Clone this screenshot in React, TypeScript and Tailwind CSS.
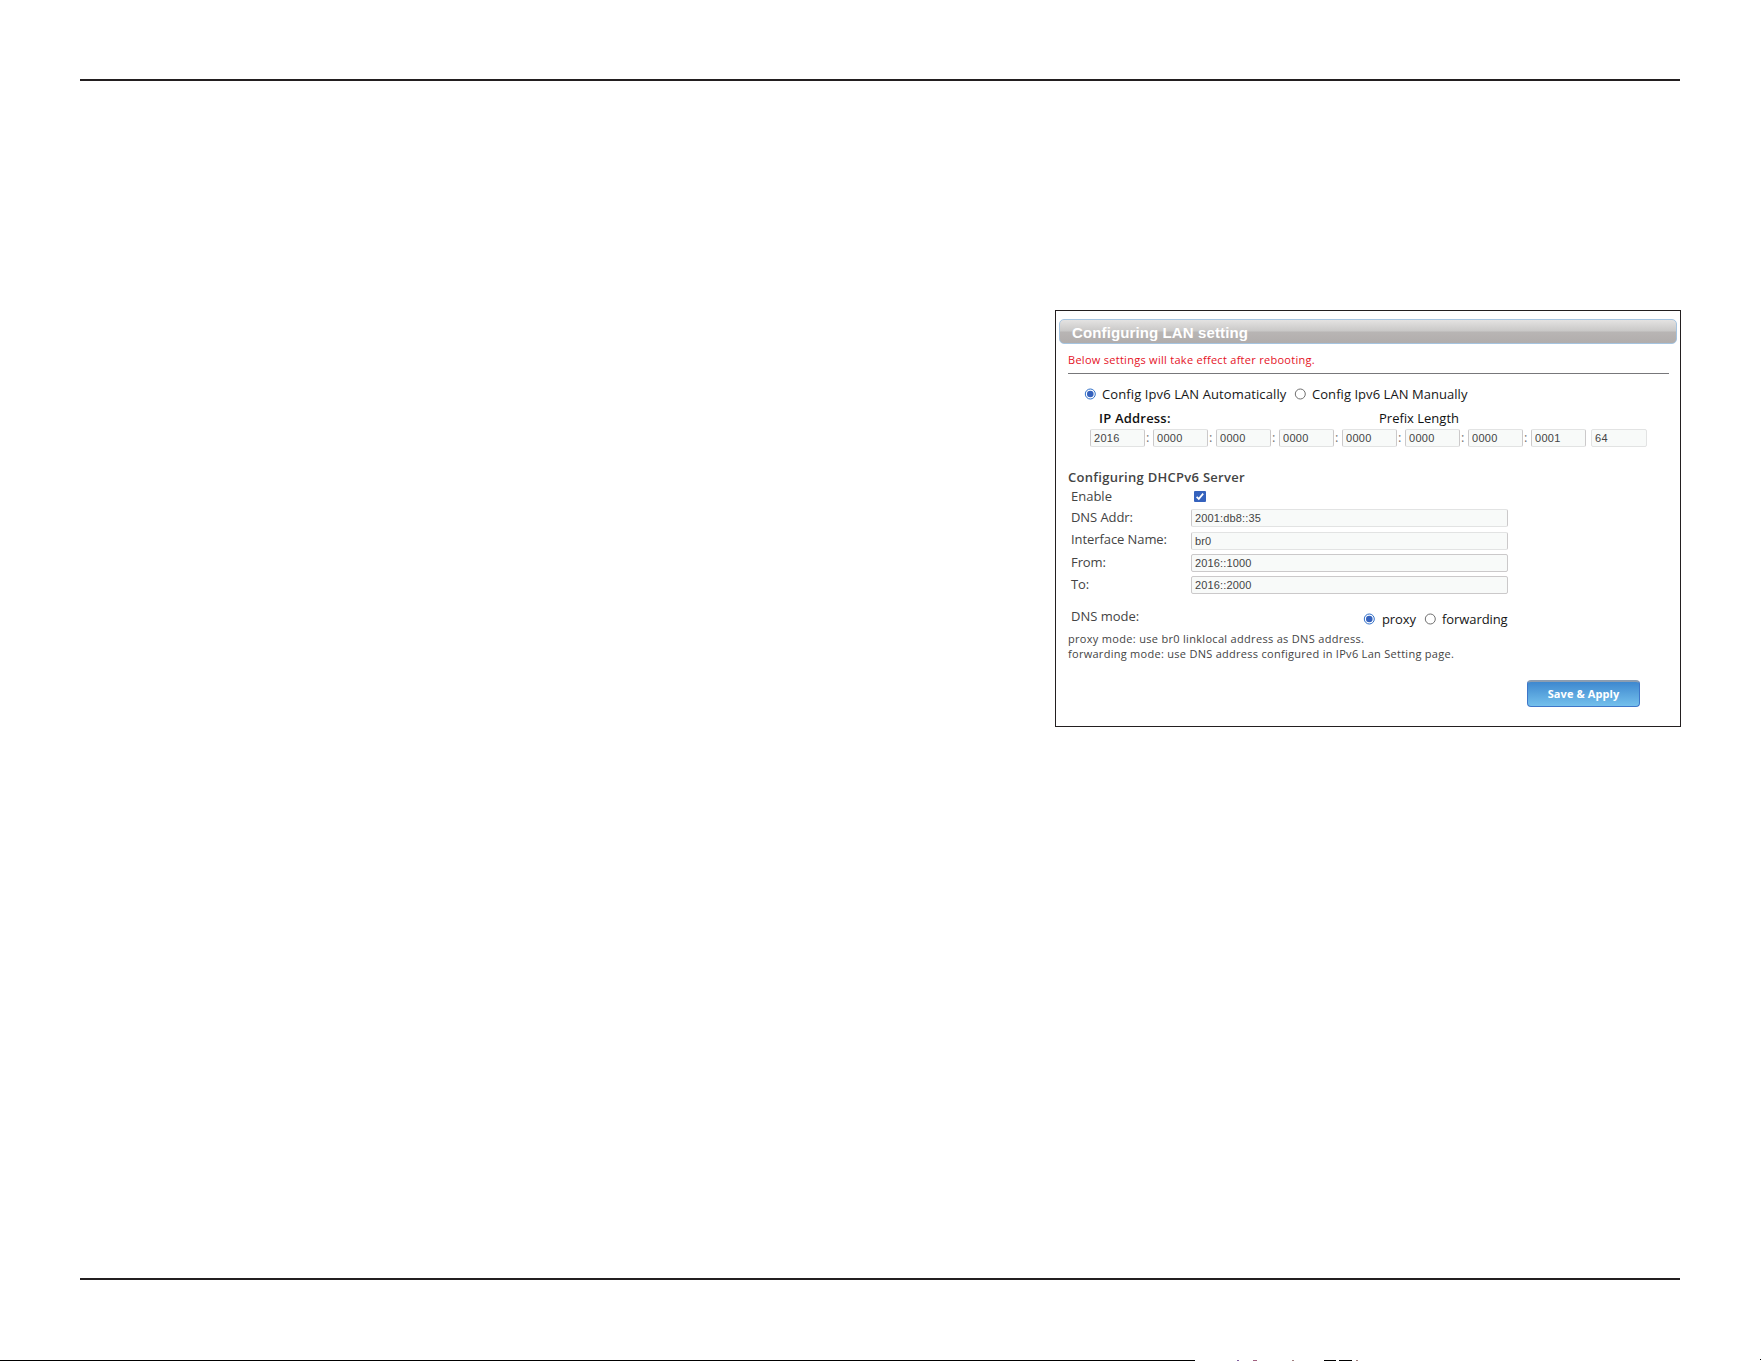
import React from 'react'

const addressParts: string[] = ['2016', '0000', '0000', '0000', '0000', '0000', '0000', '0001']

interface RadioProps {
  checked?: boolean
}

const Radio: React.FC<RadioProps> = ({ checked }) => {
  return (
    <svg className="-mt-px size-3 shrink-0" viewBox="0 0 12 12">
      <circle cx="6.3" cy="6" r="5" fill="#fff" stroke={checked ? '#2f6fc8' : '#6f6f6f'} strokeWidth="1" />
      {checked && <circle cx="6.3" cy="6" r="3.3" fill="#3562bd" />}
    </svg>
  )
}

interface FieldProps {
  label: string
  value: string
  labelClass: string
  fieldClass: string
}

const Field: React.FC<FieldProps> = ({ label, value, labelClass, fieldClass }) => {
  return (
    <div className="flex h-[18px]">
      <div className={`w-[120px] shrink-0 text-[13px] leading-[18px] tracking-[-0.08px] whitespace-nowrap ${labelClass}`}>
        {label}
      </div>
      <input
        readOnly
        value={value}
        className={`h-[18px] w-[317px] rounded-[2px] border border-x-[#cbc9ca] bg-[#f8faf9] pl-[3px] font-['Liberation_Sans'] text-[11px] tracking-[0.15px] text-[#444] ${fieldClass}`}
      />
    </div>
  )
}

const LanSettings: React.FC = () => {
  return (
    <div className="h-[417px] w-[626px] shrink-0 border border-[#231f20] bg-white pt-2 pl-[3px] text-[#444]">
      <div className="h-[25px] w-[618px] rounded-[5px] border border-[#a5c4e0] bg-[linear-gradient(#e4e3e2,#c9c8c7_48%,#b8b5b4_52%,#b1adac)] pl-3 font-['Liberation_Sans'] text-[15px] leading-[25px] font-bold tracking-[0.12px] text-white">
        Configuring LAN setting
      </div>

      <div className="ml-[9px]">
        <div className="mt-2 text-[11px] leading-4 text-[#e5121f]">
          <span className="tracking-[0.28px]">Below settings will take effect after rebooting.</span>
        </div>
        <div className="mt-[5px] h-px w-[601px] bg-[#77777a]" />

        <div className="mt-[11px] ml-4 flex h-[18px] items-center text-[13px] leading-[18px] whitespace-nowrap text-[#161616]">
          <Radio checked />
          <span className="ml-[6px] w-[192px] tracking-[0.1px]">Config Ipv6 LAN Automatically</span>
          <Radio />
          <span className="ml-[6px] tracking-[0.05px]">Config Ipv6 LAN Manually</span>
        </div>

        <div className="mt-[6px] ml-[31px] flex h-[18px] text-[13px] leading-[18px] whitespace-nowrap text-[#111]">
          <span className="w-[280px] font-semibold tracking-[0.2px]">IP Address:</span>
          <span>Prefix Length</span>
        </div>

        <div className="mt-[2px] ml-[22px] flex h-[18px]">
          {addressParts.map((part, index) => {
            return (
              <div key={index} className="flex w-[63px]">
                <input
                  readOnly
                  value={part}
                  className="h-[18px] w-[55px] rounded-[2px] border border-x-[#cbc9ca] border-y-[#e2e3e3] bg-[#f8faf9] pl-[3px] font-['Liberation_Sans'] text-[11px] tracking-[0.3px] text-[#444]"
                />
                {index < addressParts.length - 1 && (
                  <span className="ml-[1px] text-[13px] leading-[17px] text-[#777]">:</span>
                )}
              </div>
            )
          })}
          <input
            readOnly
            value="64"
            className="-ml-[3px] h-[18px] w-14 rounded-[2px] border border-[#e2e3e3] bg-[#f8faf9] pl-[3px] font-['Liberation_Sans'] text-[11px] tracking-[0.3px] text-[#444]"
          />
        </div>

        <div className="mt-[21px] h-[18px] text-[13px] leading-[18px] font-semibold tracking-[0.28px]">
          Configuring DHCPv6 Server
        </div>
        <div className="mt-px ml-[3px]">
          <div className="flex h-[18px] text-[13px] leading-[18px]">
            <div className="w-[123px]">Enable</div>
            <svg className="mt-[4px] h-[11px] w-[12px]" viewBox="0 0 12 11">
              <rect width="12" height="11" rx="1" fill="#3562bd" />
              <path d="M2.6 5.8 4.8 7.9 9.2 2.6" fill="none" stroke="#fff" strokeWidth="1.7" />
            </svg>
          </div>
          <div className="mt-1">
            <Field label="DNS Addr:" value="2001:db8::35" labelClass="-mt-px" fieldClass="border-y-[#e2e3e3]" />
          </div>
          <div className="mt-[5px]">
            <Field label="Interface Name:" value="br0" labelClass="-mt-[2px]" fieldClass="border-y-[#e2e3e3]" />
          </div>
          <div className="mt-1 flex flex-col gap-1">
            <Field label="From:" value="2016::1000" labelClass="-mt-px" fieldClass="border-y-[#cbc9ca]" />
            <Field label="To:" value="2016::2000" labelClass="-mt-px" fieldClass="border-y-[#cbc9ca]" />
          </div>
          <div className="mt-[14px] flex h-[18px] text-[13px] leading-[18px] whitespace-nowrap">
            <div className="-mt-px w-[292px]">DNS mode:</div>
            <div className="mt-[2px] flex h-[18px] items-center tracking-[-0.08px] text-[#161616]">
              <Radio checked />
              <span className="ml-[7px] w-[42px]">proxy</span>
              <Radio />
              <span className="ml-[6px]">forwarding</span>
            </div>
          </div>
        </div>

        <div className="mt-[5px] text-[11px] leading-[15px] whitespace-nowrap">
          <div className="tracking-[0.31px]">proxy mode: use br0 linklocal address as DNS address.</div>
          <div className="tracking-[0.28px]">forwarding mode: use DNS address configured in IPv6 Lan Setting page.</div>
        </div>

        <button className="mt-[19px] ml-[459px] block h-[27px] w-[113px] rounded-[4px] border border-t-2 border-[#3e76c8] border-t-[#8c9db1] bg-[linear-gradient(#3e88cf,#74c0ec)] text-[11px] leading-[20px] font-bold tracking-[0.1px] text-white">
          Save &amp; Apply
        </button>
      </div>
    </div>
  )
}

// Tops of the next page's title, cut off by the page edge
const PageEdge: React.FC = () => {
  return (
    <div className="flex h-px">
      <div className="w-[1195px] bg-black" />
      <div className="ml-[42px] w-0.5 bg-[#8060a0]" />
      <div className="ml-[14px] w-1 bg-[#a06080]" />
      <div className="ml-[35px] w-0.5 bg-[#a08080]" />
      <div className="ml-[30px] w-3 bg-black" />
      <div className="ml-[3px] w-[13px] bg-black" />
      <div className="ml-1 w-0.5 bg-[#a08080]" />
    </div>
  )
}

const App: React.FC = () => {
  return (
    <div className="flex h-[1361px] w-[1761px] flex-col overflow-hidden bg-white font-['Open_Sans',sans-serif]">
      <div className="mx-20 mt-[79px] h-0.5 w-[1600px] shrink-0 bg-[#231f20]" />
      <div className="mt-[229px] ml-[1055px] h-[968px]">
        <LanSettings />
      </div>
      <div className="mx-20 h-0.5 w-[1600px] shrink-0 bg-[#231f20]" />
      <div className="mt-auto">
        <div className="ml-auto h-px w-px bg-black" />
        <PageEdge />
      </div>
    </div>
  )
}

export default App
